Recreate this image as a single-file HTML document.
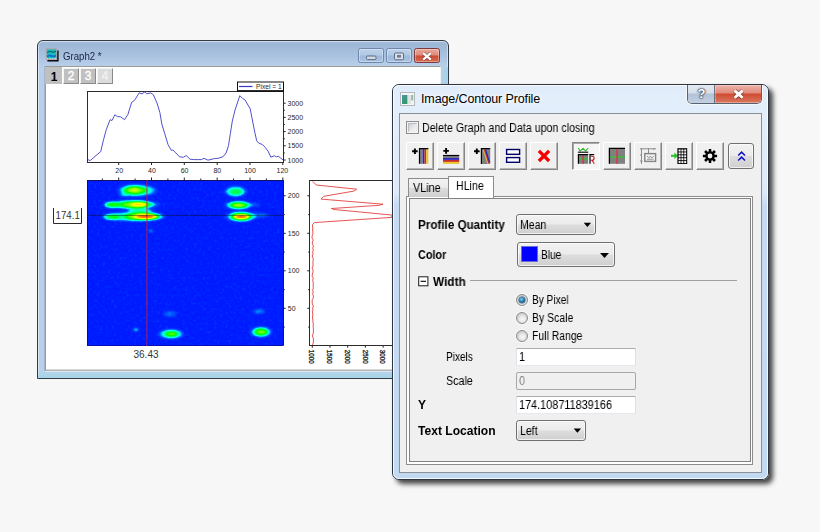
<!DOCTYPE html>
<html lang="en">
<head>
<meta charset="utf-8">
<title>Image/Contour Profile</title>
<style>
html,body{margin:0;padding:0;}
body{width:820px;height:532px;overflow:hidden;position:relative;background:#f7f7f7;font-family:"Liberation Sans",sans-serif;font-size:11px;color:#000;}
*{box-sizing:border-box;}
.abs{position:absolute;}
/* ---------- graph window ---------- */
#gw{position:absolute;left:37px;top:40px;width:412px;height:339px;border:1px solid #323a44;border-radius:6px 6px 0 0;
 background:linear-gradient(#a9c0dc 0px,#9db7d6 3px,#a8c1df 14px,#b9d0ea 26px,#b9d0ea 320px,#b4d5ea 337px);overflow:hidden;}
#gw .hl{position:absolute;left:0;top:0;right:0;bottom:0;border:1px solid rgba(255,255,255,.45);border-radius:5px 5px 0 0;}
#gw .client{position:absolute;left:7px;top:25px;width:396px;height:305px;background:#fff;border:1px solid #9b9b9b;border-right-color:#f2f2f2;border-bottom-color:#b4b4b4;box-shadow:-1px 0 0 rgba(140,150,160,.45),0 1px 0 rgba(225,235,245,.9),inset 0 -1px 0 #d8d8d8;}
#gw .ttl{position:absolute;left:25px;top:8px;font-size:11px;line-height:14px;color:#1c2346;white-space:nowrap;transform-origin:0 50%;transform:scaleX(.875);}
.cb{position:absolute;top:7px;height:15px;width:26px;border:1px solid #6f87a8;border-radius:2.5px;background:linear-gradient(#bcd1ea 0,#b1c9e5 48%,#9db9da 52%,#a9c3e2 100%);box-shadow:inset 0 0 0 1px rgba(255,255,255,.35);}
.cb.x{border-color:#7c3a3a;background:linear-gradient(#eaa798 0,#dd8b7a 48%,#cc4a32 52%,#d66a50 100%);}
.pt{position:absolute;top:27px;margin-left:-1px;height:16px;width:16px;background:#c0c0c0;border:1px solid;border-color:#f4f4f4 #8a8a8a #8a8a8a #f4f4f4;color:#fff;font-weight:bold;font-size:12px;line-height:14px;text-align:center;}
.pt.n{font-weight:normal;-webkit-text-stroke:.35px #fff;}
/* ---------- dialog ---------- */
#dw{position:absolute;left:392px;top:84px;width:377px;height:396px;border:1px solid #2e3440;border-radius:7px;
 background:linear-gradient(#dfebfa 0,#e3eefb 12px,#e2edfb 30px,#dde9f9 108px,#c6dbf3 120px,#c2d9f2 100%);
 box-shadow:4px 4px 5px rgba(0,0,0,.72);}
#dw .hl{position:absolute;left:0;top:0;right:0;bottom:0;border:1px solid rgba(255,255,255,.8);border-radius:6px;}
#dw .client{position:absolute;left:6px;top:28px;width:363px;height:360px;background:#f0f0f0;border:1px solid #8c9096;}
#dw .ttl{position:absolute;left:28px;top:7px;font-size:12.5px;line-height:14px;color:#000;white-space:nowrap;letter-spacing:-.12px;text-shadow:0 0 4px #fff,0 0 6px #fff;}
.ui{position:absolute;white-space:nowrap;line-height:13px;font-size:12px;will-change:transform;transform-origin:0 0;}
.b{font-weight:bold;}
.tb{position:absolute;top:142px;width:28px;height:28px;background:#f0f0f0;border:1px solid;border-color:#fff #868686 #868686 #fff;box-shadow:inset -1px -1px 0 #b4b4b4;}
.tb.dn{border-color:#868686 #fff #fff #868686;box-shadow:inset 1px 1px 0 #a8a8a8;background:#f6f6f6;}
.combo{position:absolute;border:1px solid #707070;border-radius:3px;background:linear-gradient(#f2f2f2 0,#ebebeb 48%,#dddddd 52%,#cfcfcf 100%);box-shadow:inset 0 0 0 1px rgba(255,255,255,.7);}
.inp{position:absolute;left:516px;width:120px;height:18px;background:#fff;border:1px solid;border-color:#abadb3 #dbdfe6 #e3e9ef #e2e3ea;}
.radio{position:absolute;left:516px;width:12px;height:12px;border-radius:50%;border:1px solid #8a8b8b;background:radial-gradient(circle at 55% 60%,#f8f8f8 0,#ececec 30%,#d0d0d0 65%,#bcbcbc 100%);box-shadow:0 0 0 1px rgba(255,255,255,.55);}
</style>
</head>
<body>
<!-- ================= Graph window ================= -->
<div id="gw">
  <div class="hl"></div>
  <svg class="abs" style="left:7px;top:7px" width="15" height="15" viewBox="0 0 15 15">
    <path d="M2.4 11.6H11.9V2.4H13.6V13.5H2.4z" fill="#000"/>
    <rect x="1.2" y="0.8" width="10.6" height="10.8" fill="#14c2ba" stroke="#c0a0a8" stroke-width="1"/>
    <path d="M2.2 4.8 Q4.6 2.6 6.6 3.8 T10.8 3" stroke="#0a6474" stroke-width="1.2" fill="none"/>
    <path d="M2 8.6 Q4.6 6.8 6.6 7.9 T11 7.4" stroke="#1470d0" stroke-width="1.8" fill="none"/>
    <path d="M1.6 10.6h9.8" stroke="#e8d8e0" stroke-width="1" stroke-dasharray="1.6 1"/>
  </svg>
  <div class="ttl">Graph2 *</div>
  <div class="cb" style="left:320px"><svg class="abs" style="left:0;top:0" width="24" height="13" viewBox="0 -1 24 13"><rect x="7.5" y="6" width="9.5" height="3.6" rx="1" fill="#d3d9e2" stroke="#5d6c84"/></svg></div>
  <div class="cb" style="left:348px"><svg class="abs" style="left:0;top:0" width="24" height="13" viewBox="0 -1 24 13"><rect x="7.5" y="3" width="9" height="6.8" rx="1" fill="#dbe0e8" stroke="#5d6c84"/><rect x="10" y="5" width="4" height="2.6" fill="#6c7a92"/></svg></div>
  <div class="cb x" style="left:376px"><svg class="abs" style="left:0;top:0" width="24" height="13" viewBox="0 -1 24 13"><path d="M8.2 3.2l7.6 6.4M15.8 3.2l-7.6 6.4" stroke="#5a2a2a" stroke-width="3.6" stroke-opacity=".55" fill="none"/><path d="M8.2 3.2l7.6 6.4M15.8 3.2l-7.6 6.4" stroke="#fff" stroke-width="2.2" fill="none"/></svg></div>
  <div class="abs" style="right:0;top:26px;width:7px;height:311px;background:linear-gradient(90deg,rgba(170,215,232,0),rgba(160,212,232,.9))"></div>
  <div class="abs" style="left:0;bottom:0;width:410px;height:7px;background:linear-gradient(rgba(170,215,232,0),rgba(165,212,230,.9))"></div>
  <div class="client"></div>
  <div class="pt" style="left:8px;top:26px;width:17px;height:17px;border-color:#c0c0c0;color:#000;line-height:18px;font-size:12px;text-indent:1px">1</div>
  <div class="pt n" style="left:26px">2</div>
  <div class="pt n" style="left:43px">3</div>
  <div class="pt n" style="left:60px;background:#dcdcdc;color:#f2f2f2;-webkit-text-stroke:.3px #f2f2f2">4</div>
</div>
<svg class="abs" style="left:0;top:0" width="820" height="532" viewBox="0 0 820 532" font-family="'Liberation Sans',sans-serif">
<defs>
<filter id="jet" x="0" y="0" width="100%" height="100%" color-interpolation-filters="sRGB">
<feTurbulence type="fractalNoise" baseFrequency="0.35" numOctaves="2" seed="7" result="n"/>
<feColorMatrix in="n" type="matrix" values="0 0 0 0 0  0 0 0 0 0  0 0 0 0 0  1.5 0 0 0 -0.74" result="na"/>
<feGaussianBlur in="SourceGraphic" stdDeviation="0.9" result="s"/>
<feComposite in="s" in2="na" operator="arithmetic" k1="0" k2="1" k3="0.07" k4="0" result="m"/>
<feColorMatrix in="m" type="matrix" values="0 0 0 1 0  0 0 0 1 0  0 0 0 1 0  0 0 0 0 1" result="g"/>
<feComponentTransfer in="g"><feFuncR type="table" tableValues="0 0 0 0 0 0.6 1 1 1"/><feFuncG type="table" tableValues="0.06 0.35 1 1 1 1 1 0.5 0"/><feFuncB type="table" tableValues="1 1 1 0.5 0 0 0 0 0"/></feComponentTransfer>
</filter>
<radialGradient id="g1"><stop offset="0" stop-color="#fff" stop-opacity="1"/><stop offset="0.55" stop-color="#fff" stop-opacity="0.9"/><stop offset="0.8" stop-color="#fff" stop-opacity="0.45"/><stop offset="1" stop-color="#fff" stop-opacity="0"/></radialGradient>
</defs>
<g filter="url(#jet)">
<rect x="87" y="180" width="196" height="166" fill="#fff" fill-opacity="0.02"/>
<ellipse cx="136" cy="190.5" rx="20" ry="7" fill="url(#g1)" opacity="0.3"/>
<ellipse cx="134.5" cy="190.3" rx="13.5" ry="5" fill="url(#g1)" opacity="0.45"/>
<ellipse cx="134" cy="190" rx="6" ry="2.6" fill="url(#g1)" opacity="0.2"/>
<ellipse cx="132" cy="204.6" rx="30" ry="5" fill="url(#g1)" opacity="0.3"/>
<ellipse cx="112" cy="204.8" rx="9" ry="3.5" fill="url(#g1)" opacity="0.4"/>
<ellipse cx="135" cy="204.6" rx="20" ry="4.5" fill="url(#g1)" opacity="0.45"/>
<ellipse cx="139" cy="204.6" rx="10" ry="3" fill="url(#g1)" opacity="0.5"/>
<ellipse cx="134" cy="216.5" rx="34" ry="5.5" fill="url(#g1)" opacity="0.3"/>
<ellipse cx="112" cy="217" rx="10" ry="3.5" fill="url(#g1)" opacity="0.35"/>
<ellipse cx="142" cy="216.5" rx="22" ry="4.5" fill="url(#g1)" opacity="0.5"/>
<ellipse cx="146" cy="216.6" rx="14" ry="3.2" fill="url(#g1)" opacity="0.8"/>
<ellipse cx="140" cy="210.8" rx="15" ry="3" fill="url(#g1)" opacity="0.3"/>
<ellipse cx="150" cy="190.5" rx="9" ry="5" fill="url(#g1)" opacity="0.1"/>
<ellipse cx="124" cy="195" rx="6" ry="2.5" fill="url(#g1)" opacity="0.15"/>
<ellipse cx="235.5" cy="191.5" rx="12" ry="6" fill="url(#g1)" opacity="0.3"/>
<ellipse cx="236" cy="192" rx="8" ry="4" fill="url(#g1)" opacity="0.18"/>
<ellipse cx="238.5" cy="205.2" rx="15" ry="5" fill="url(#g1)" opacity="0.3"/>
<ellipse cx="238.5" cy="205.2" rx="11" ry="3.5" fill="url(#g1)" opacity="0.45"/>
<ellipse cx="239" cy="205.2" rx="5" ry="2" fill="url(#g1)" opacity="0.15"/>
<ellipse cx="241" cy="216.6" rx="17" ry="6" fill="url(#g1)" opacity="0.3"/>
<ellipse cx="241" cy="216.6" rx="12.5" ry="4.5" fill="url(#g1)" opacity="0.5"/>
<ellipse cx="241.5" cy="216.8" rx="9" ry="2.6" fill="url(#g1)" opacity="0.8"/>
<ellipse cx="258" cy="215.3" rx="14" ry="2.5" fill="url(#g1)" opacity="0.14"/>
<ellipse cx="252" cy="204.8" rx="10" ry="2" fill="url(#g1)" opacity="0.12"/>
<ellipse cx="171" cy="334" rx="14" ry="5.5" fill="url(#g1)" opacity="0.3"/>
<ellipse cx="171.5" cy="334" rx="8" ry="3.5" fill="url(#g1)" opacity="0.4"/>
<ellipse cx="261" cy="332" rx="12" ry="6" fill="url(#g1)" opacity="0.3"/>
<ellipse cx="261" cy="332" rx="8" ry="4.2" fill="url(#g1)" opacity="0.42"/>
<ellipse cx="170" cy="314" rx="8" ry="3.5" fill="url(#g1)" opacity="0.12"/>
<ellipse cx="259" cy="311.5" rx="7" ry="3" fill="url(#g1)" opacity="0.15"/>
<ellipse cx="136" cy="329.7" rx="3" ry="1.8" fill="url(#g1)" opacity="0.3"/>
<ellipse cx="151" cy="231" rx="2.5" ry="1.5" fill="url(#g1)" opacity="0.25"/>
</g>
<path d="M87.5 346 V180.5 H283.5" stroke="#10106a" fill="none" stroke-width="1"/>
<path d="M87 345.5 H283.5 V180" stroke="#0a10b8" fill="none" stroke-width="1"/>
<line x1="146.9" y1="180" x2="146.9" y2="346" stroke="#c0203c" stroke-width="1.1" opacity="0.8"/>
<line x1="87" y1="215.4" x2="283" y2="215.4" stroke="#06101c" stroke-width="0.9" opacity="0.55"/>
<path d="M102.3 180 v-1.5 M118.7 180 v-2.5 M135.1 180 v-1.5 M151.5 180 v-2.5 M167.9 180 v-1.5 M184.3 180 v-2.5 M200.8 180 v-1.5 M217.2 180 v-2.5 M233.6 180 v-1.5 M250.0 180 v-2.5 M266.4 180 v-1.5 M282.8 180 v-2.5 M283.5 327.1 h1.3 M283.5 308.3 h2.2 M283.5 289.6 h1.3 M283.5 270.8 h2.2 M283.5 252.1 h1.3 M283.5 233.3 h2.2 M283.5 214.6 h1.3 M283.5 195.8 h2.2" stroke="#222" stroke-width="1" fill="none"/>
<rect x="87.5" y="91.5" width="196" height="71" fill="#fff" stroke="#2c2c2c" stroke-width="1"/>
<path d="M118.7 163 v2 M151.5 163 v2 M184.3 163 v2 M217.2 163 v2 M250.0 163 v2 M282.8 163 v2 M283.5 160.0 h2.2 M283.5 152.9 h1.3 M283.5 145.8 h2.2 M283.5 138.7 h1.3 M283.5 131.6 h2.2 M283.5 124.5 h1.3 M283.5 117.4 h2.2 M283.5 110.3 h1.3 M283.5 103.2 h2.2" stroke="#222" stroke-width="1" fill="none"/>
<path d="M87.5 159.6 L90.3 160.5 L96.0 155.5 L100.7 151.7 L103.5 139.8 L106.3 129.5 L110.1 119.7 L112.0 120.5 L114.8 114.8 L117.6 116.7 L120.4 116.7 L124.5 119.7 L127.9 114.5 L131.7 102.3 L134.5 100.4 L139.2 92.9 L142.0 93.8 L144.8 91.9 L146.7 93.8 L150.5 92.9 L153.3 94.7 L157.1 103.2 L159.9 112.6 L161.8 123.9 L164.6 133.3 L168.0 144.5 L171.2 150.2 L173.0 150.2 L175.9 153.0 L179.6 156.8 L183.4 157.3 L186.2 155.5 L190.0 159.2 L193.8 159.6 L197.5 159.6 L201.3 159.6 L204.1 158.3 L207.9 160.2 L214.4 158.6 L218.2 158.3 L222.9 156.8 L226.1 153.0 L228.5 145.5 L230.4 133.3 L232.3 121.1 L235.1 109.8 L239.8 95.7 L242.6 98.5 L244.9 99.8 L250.2 108.8 L252.0 118.2 L254.8 132.3 L256.7 140.8 L258.6 143.0 L262.4 144.5 L265.2 147.4 L268.0 151.1 L270.8 157.1 L274.6 155.8 L276.5 156.8 L278.3 156.2 L283.0 160.0" stroke="#3c3cc8" stroke-width="0.9" fill="none" stroke-linejoin="round"/>
<rect x="237.5" y="82" width="46" height="9" fill="#fff" stroke="#111" stroke-width="1"/>
<path d="M237 91 H284" stroke="#111" stroke-width="1.6" fill="none"/>
<line x1="239" y1="86.5" x2="252.5" y2="86.5" stroke="#3838c8" stroke-width="1.2"/>
<text x="256" y="89" font-size="7" fill="#2a2a2a" textLength="25.6" lengthAdjust="spacingAndGlyphs">Pixel = 1</text>
<g font-size="7" fill="#262626" text-anchor="middle">
<text x="119.2" y="173.3">20</text>
<text x="151.9" y="173.3">40</text>
<text x="184.6" y="173.3">60</text>
<text x="217.3" y="173.3">80</text>
<text x="250.0" y="173.3">100</text>
<text x="282.4" y="173.3">120</text>
</g>
<g font-size="7" fill="#262626">
<text x="287.5" y="162.6">1000</text>
<text x="287.5" y="148.4">1500</text>
<text x="287.5" y="134.2">2000</text>
<text x="287.5" y="120.0">2500</text>
<text x="287.5" y="105.8">3000</text>
<text x="287.8" y="310.9">50</text>
<text x="287.8" y="273.4">100</text>
<text x="287.8" y="235.9">150</text>
<text x="287.8" y="198.4">200</text>
</g>
<rect x="309.5" y="180.5" width="110" height="165" fill="#fff" stroke="#2c2c2c" stroke-width="1"/>
<path d="M309.5 327.1 h-1.3 M309.5 308.3 h-2.2 M309.5 289.6 h-1.3 M309.5 270.8 h-2.2 M309.5 252.1 h-1.3 M309.5 233.3 h-2.2 M309.5 214.6 h-1.3 M309.5 195.8 h-2.2 M312.3 345.5 v2.2 M330.0 345.5 v2.2 M347.7 345.5 v2.2 M365.4 345.5 v2.2 M383.1 345.5 v2.2" stroke="#222" stroke-width="1" fill="none"/>
<path d="M312.6 181.3 L316.3 185.0 L356.7 189.2 L353.9 191.1 L323.8 196.3 L321.0 199.1 L383.0 204.2 L379.3 205.3 L331.4 208.5 L334.2 209.5 L392.4 215.1 L391.5 217.4 L314.4 222.6 L312.6 224.5 L312.4 226.0 L312.8 228.0 L312.6 230.0 L312.9 232.0 L312.9 234.0 L312.1 236.0 L312.0 238.0 L313.3 240.0 L312.4 242.0 L312.4 244.0 L313.5 246.0 L312.7 248.0 L313.3 250.0 L312.7 252.0 L313.0 254.0 L312.2 256.0 L313.0 258.0 L313.3 260.0 L312.8 262.0 L313.1 264.0 L313.0 266.0 L312.1 268.0 L313.1 270.0 L312.9 272.0 L312.5 274.0 L312.0 276.0 L313.3 278.0 L312.7 280.0 L313.1 282.0 L313.3 284.0 L313.1 286.0 L313.4 288.0 L312.6 290.0 L313.2 292.0 L312.7 294.0 L313.4 296.0 L313.3 298.0 L312.1 300.0 L312.2 302.0 L312.3 304.0 L313.4 306.0 L312.7 308.0 L312.9 310.0 L312.5 312.0 L312.8 314.0 L312.6 316.0 L312.5 318.0 L312.9 320.0 L312.9 322.0 L313.4 324.0 L313.0 326.0 L313.4 328.0 L313.3 330.0 L313.5 332.0 L313.0 334.0 L312.2 336.0 L313.3 338.0 L313.4 340.0 L313.4 342.0 L312.9 344.0 L312.6 345.0" stroke="#e23636" stroke-width="0.85" fill="none" stroke-linejoin="round"/>
<g font-size="6.6" fill="#1a1a1a" stroke="#1a1a1a" stroke-width=".3">
<text transform="translate(309.4 349.8) rotate(90)" textLength="13.8" lengthAdjust="spacingAndGlyphs">1000</text>
<text transform="translate(327.1 349.8) rotate(90)" textLength="13.8" lengthAdjust="spacingAndGlyphs">1500</text>
<text transform="translate(344.8 349.8) rotate(90)" textLength="13.8" lengthAdjust="spacingAndGlyphs">2000</text>
<text transform="translate(362.5 349.8) rotate(90)" textLength="13.8" lengthAdjust="spacingAndGlyphs">2500</text>
<text transform="translate(380.2 349.8) rotate(90)" textLength="13.8" lengthAdjust="spacingAndGlyphs">3000</text>
</g>
<path d="M53.5 208 V223.5 H81.5 V208" stroke="#2a2a2a" stroke-width="1" fill="none"/>
<text x="55.6" y="219.4" font-size="10.5" fill="#333" textLength="24.2" lengthAdjust="spacingAndGlyphs">174.1</text>
<text x="146" y="358.3" font-size="10" fill="#333" text-anchor="middle">36.43</text>
</svg>
<!-- ================= Dialog ================= -->
<div id="dw">
  <div class="hl"></div>
  <div class="ttl">Image/Contour Profile</div>
  <div class="client"></div>
</div>
<!-- dialog title icon + buttons -->
<svg class="abs" style="left:400px;top:92px" width="15" height="14" viewBox="0 0 15 14">
  <defs><linearGradient id="ig" x1="0" x2="0.6" y1="0" y2="1"><stop offset="0" stop-color="#4f93a8"/><stop offset="1" stop-color="#2f9a68"/></linearGradient></defs>
  <rect x="0.5" y="0.5" width="14" height="13" fill="#f4f6f6" stroke="#b4babc"/>
  <rect x="2" y="3" width="5.6" height="9" fill="url(#ig)"/>
  <rect x="7.6" y="3" width="3.6" height="9" fill="#dfe3e2"/>
  <rect x="11.2" y="3" width="2" height="5.4" fill="#8fb8a4"/>
</svg>
<div class="abs" style="left:686px;top:85px;width:77px;height:20px;border-radius:0 0 6px 6px;background:rgba(255,255,255,.6)"></div>
<div class="abs" style="left:687px;top:85px;width:75px;height:19px;border:1px solid #5a6272;border-top:none;border-radius:0 0 5px 5px;overflow:hidden;">
  <div class="abs" style="left:0;top:0;width:27px;height:18px;background:linear-gradient(#e4eaf2 0,#d5dde9 45%,#b4c2d6 50%,#c3d0e2 100%);border-right:1px solid #6a7282;"></div>
  <div class="abs" style="left:27px;top:0;width:47px;height:18px;background:linear-gradient(#eeb5aa 0,#e08a7a 45%,#cf4a30 50%,#d97a62 100%);box-shadow:inset 0 0 0 1px rgba(255,255,255,.3)"></div>
  <div class="abs" style="left:0;top:0;width:27px;text-align:center;font-weight:bold;font-size:13px;line-height:17px;color:#fff;text-shadow:0 0 1px #3a4252,0 0 1px #3a4252,0 0 2px #3a4252,0 0 2px #3a4252">?</div>
  <svg class="abs" style="left:27px;top:0" width="47" height="18" viewBox="0 0 47 18"><path d="M19.6 5.6l8 7.2M27.6 5.6l-8 7.2" stroke="#4a2a2a" stroke-width="4.4" stroke-opacity=".6" fill="none"/><path d="M19.6 5.6l8 7.2M27.6 5.6l-8 7.2" stroke="#fff" stroke-width="2.8" fill="none"/></svg>
</div>
<!-- checkbox -->
<div class="abs" style="left:406px;top:121px;width:13px;height:13px;border:1px solid #8e8f8f;background:#f4f4f4;"><div class="abs" style="left:1px;top:1px;width:9px;height:9px;border:1px solid;border-color:#b8bcc2 #e6e8ea #eceeef #babec4;background:linear-gradient(135deg,#ccd0d6 0,#e2e4e7 45%,#f6f6f6 100%)"></div></div>
<div class="ui" id="t_del" style="transform:scaleX(0.889);left:422px;top:122px">Delete Graph and Data upon closing</div>
<!-- toolbar -->
<div class="tb" style="left:406px"><svg width="26" height="26" viewBox="0 0 26 26">
  <path d="M5.1 8.2h5.6M7.9 5.4v5.6" stroke="#000" stroke-width="1.9"/>
  <rect x="12.6" y="5.4" width="3" height="15.4" fill="#808080"/><rect x="15.6" y="5.4" width="1.8" height="15.4" fill="#2828c8"/><rect x="17.4" y="5.4" width="1.8" height="15.4" fill="#c82828"/><rect x="19.2" y="5.4" width="2.1" height="15.4" fill="#e8c428"/>
  <path d="M12.5 20.8V5.6h8.8" stroke="#000" stroke-width="1.2" fill="none"/>
</svg></div>
<div class="tb" style="left:437px"><svg width="26" height="26" viewBox="0 0 26 26">
  <path d="M5.3 7.9h5.6M8.1 5.1v5.6" stroke="#000" stroke-width="1.9"/>
  <rect x="5" y="12.4" width="16.2" height="2.6" fill="#808080"/><rect x="5" y="15" width="16.2" height="1.9" fill="#2828c8"/><rect x="5" y="16.9" width="16.2" height="2" fill="#c82828"/><rect x="5" y="18.9" width="16.2" height="1.9" fill="#e8c428"/>
  <path d="M5 12.5h16.2" stroke="#000" stroke-width="1.2"/>
</svg></div>
<div class="tb" style="left:468px"><svg width="26" height="26" viewBox="0 0 26 26">
  <path d="M5 8.2h5.6M7.8 5.4v5.6" stroke="#000" stroke-width="1.9"/>
  <rect x="12.4" y="5.4" width="8.8" height="15.6" fill="#808080"/>
  <path d="M14.4 6.6l4.6 14" stroke="#e8c428" stroke-width="1.3"/><path d="M15.5 6.6l4.4 13.4" stroke="#c82828" stroke-width="1.1"/><path d="M16.5 6.6l4.2 12.8" stroke="#2828c8" stroke-width="1.3"/>
  <path d="M12.4 21V5.6h8.8" stroke="#000" stroke-width="1.2" fill="none"/>
</svg></div>
<div class="tb" style="left:499px"><svg width="26" height="26" viewBox="0 0 26 26">
  <rect x="6.6" y="6.5" width="13" height="4.8" fill="#fff" stroke="#000068" stroke-width="1.4"/>
  <rect x="6.6" y="14.6" width="13" height="4.7" fill="#fff" stroke="#000068" stroke-width="1.4"/>
</svg></div>
<div class="tb" style="left:530px"><svg width="26" height="26" viewBox="0 0 26 26">
  <path d="M7.9 7.8l10.2 10.2M18.1 7.8l-10.2 10.2" stroke="#f40000" stroke-width="3.3" fill="none"/>
</svg></div>
<div class="tb dn" style="left:572px"><svg width="26" height="26" viewBox="0.9 0 26 26">
  <path d="M6.2 5l1.8 3l3 -2.6l2.6 2.6l2.4 -3" stroke="#28b428" stroke-width="1.1" fill="none"/>
  <path d="M5.8 9.2h10.4" stroke="#000" stroke-width="1.1"/>
  <rect x="6.2" y="11.2" width="9.8" height="9.6" fill="#808080"/>
  <path d="M6.2 15.8h9.8" stroke="#38c038" stroke-width="1.4"/><path d="M11 11.2v9.6" stroke="#d83838" stroke-width="1.4"/>
  <path d="M6.3 20.8V11.6h9.8" stroke="#000" stroke-width="1.2" fill="none"/>
  <path d="M17.9 20.8V11.6h4.2" stroke="#000" stroke-width="1.2" fill="none"/>
  <path d="M18.6 13.2h1.4q2 0 2 2t-2 2h-1.4M20 17.2l2.2 3.6" stroke="#c81818" stroke-width="1.1" fill="none"/>
</svg></div>
<div class="tb" style="left:603px"><svg width="26" height="26" viewBox="0 0 26 26">
  <rect x="5.2" y="5" width="15.8" height="15.8" fill="#808080"/>
  <path d="M5.2 14h15.8" stroke="#38c038" stroke-width="1.5"/><path d="M13.1 5v15.8" stroke="#d83838" stroke-width="1.5"/>
  <path d="M5.4 20.8V5.4h15.6" stroke="#000" stroke-width="1.3" fill="none"/>
</svg></div>
<div class="tb" style="left:634px"><svg width="26" height="26" viewBox="0 0 26 26">
  <path d="M6.5 5v16M5 5.8h16M5 12h1.5M5 18h2.5M13.5 5v5M18.8 5v2" stroke="#8c8c8c" stroke-width="1" fill="none"/>
  <rect x="9.8" y="10.6" width="10.8" height="7.8" fill="#f0f0f0" stroke="#848484" stroke-width="1.4"/>
  <path d="M12 13l1.6 1.6l1.8 -1.2l1.6 1.4l1.4 -1.6M12 16.2h6.4" stroke="#848484" stroke-width=".9" fill="none"/>
</svg></div>
<div class="tb" style="left:665px"><svg width="26" height="26" viewBox="0 0 26 26">
  <path d="M5 12.8h5" stroke="#28c028" stroke-width="2"/><path d="M8.4 9.6l3.6 3.2l-3.6 3.2z" fill="#28c028"/>
  <rect x="11.4" y="5.2" width="9.8" height="15.8" fill="#000"/>
  <g fill="#fff"><rect x="12.6" y="6.5" width="2" height="2"/><rect x="15.4" y="6.5" width="2" height="2"/><rect x="18.2" y="6.5" width="2" height="2"/><rect x="12.6" y="9.4" width="2" height="2"/><rect x="15.4" y="9.4" width="2" height="2"/><rect x="18.2" y="9.4" width="2" height="2"/><rect x="12.6" y="12.3" width="2" height="2"/><rect x="15.4" y="12.3" width="2" height="2"/><rect x="18.2" y="12.3" width="2" height="2"/><rect x="12.6" y="15.2" width="2" height="2"/><rect x="15.4" y="15.2" width="2" height="2"/><rect x="18.2" y="15.2" width="2" height="2"/><rect x="12.6" y="18.1" width="2" height="2"/><rect x="15.4" y="18.1" width="2" height="2"/><rect x="18.2" y="18.1" width="2" height="2"/></g>
</svg></div>
<div class="tb" style="left:696px"><svg width="26" height="26" viewBox="0 0 26 26">
  <g stroke="#000" stroke-width="2.5" stroke-linecap="butt"><path d="M13 5.9v14.2M5.9 13h14.2M8 8l10 10M18 8l-10 10"/></g>
  <circle cx="13" cy="13" r="4.8" fill="#000"/><circle cx="13" cy="13" r="2.4" fill="#f0f0f0"/>
</svg></div>
<div class="abs" style="left:728px;top:143px;width:26px;height:26px;border:1px solid #707070;border-radius:3px;background:linear-gradient(#f2f2f2 0,#ebebeb 48%,#dddddd 52%,#cfcfcf 100%);box-shadow:inset 0 0 0 1px rgba(255,255,255,.7)"><svg width="24" height="24" viewBox="0 0 24 24">
  <path d="M9.2 11.5l3.4 -3.4l3.4 3.4M9.2 16.5l3.4 -3.4l3.4 3.4" stroke="#1010c8" stroke-width="1.5" fill="none"/>
</svg></div>
<!-- tab control -->
<div class="abs" style="left:406px;top:196px;width:347px;height:269px;border:1px solid;border-color:#8c8c8c #8c8c8c #8c8c8c #8c8c8c;background:#fff;"></div>
<div class="abs" style="left:409px;top:198px;width:342px;height:264px;border:1px solid #828282;background:#f0f0f0;"></div>
<div class="abs" style="left:408px;top:178px;width:41px;height:19px;border:1px solid #8c8c8c;border-bottom:none;background:linear-gradient(#f2f2f2 0,#ebebeb 48%,#dddddd 52%,#cfcfcf 100%);"></div>
<div class="abs" style="left:448px;top:176px;width:46px;height:22px;border:1px solid #8c8c8c;border-bottom:none;background:#fff;"></div>
<div class="ui" id="t_vl" style="transform:scaleX(0.902);left:413px;top:182px">VLine</div>
<div class="ui" id="t_hl" style="transform:scaleX(0.885);left:456px;top:180px">HLine</div>
<!-- form -->
<div class="ui b" id="t_pq" style="transform:scaleX(0.971);left:418px;top:219px">Profile Quantity</div>
<div class="combo" style="left:516px;top:214px;width:80px;height:21px"></div>
<div class="ui" id="t_mean" style="transform:scaleX(0.877);left:520px;top:219px">Mean</div>
<div class="ui b" id="t_col" style="transform:scaleX(0.904);left:418px;top:249px">Color</div>
<div class="combo" style="left:517px;top:242px;width:98px;height:25px"></div>
<div class="abs" style="left:521px;top:246px;width:17px;height:16px;background:#0000fe;border:1px solid #6a6ae0"></div>
<div class="ui" id="t_blue" style="transform:scaleX(0.846);left:541px;top:249px">Blue</div>
<svg class="abs" style="left:417px;top:275px" width="13" height="13" viewBox="0 0 13 13"><rect x="1.7" y="1.8" width="9.2" height="9" fill="#fff" stroke="#1a1a1a" stroke-width="1"/><path d="M3.6 6.3h5.4" stroke="#000" stroke-width="1.1"/></svg>
<div class="ui b" id="t_w" style="transform:scaleX(0.982);left:433px;top:276px">Width</div>
<div class="abs" style="left:470px;top:280px;width:267px;height:1px;background:#a0a0a0"></div>
<div class="radio" style="top:294px"><span class="abs" style="left:2px;top:2px;width:6px;height:6px;border-radius:50%;background:radial-gradient(circle at 42% 38%,#8fd2ee 0,#2a86bc 40%,#0c4470 85%,#0a3050 100%);box-shadow:0 0 0 .5px #1a4a6a"></span></div>
<div class="radio" style="top:312px"></div>
<div class="radio" style="top:330px"></div>
<div class="ui" id="t_r1" style="transform:scaleX(0.843);left:532px;top:294px">By Pixel</div>
<div class="ui" id="t_r2" style="transform:scaleX(0.873);left:532px;top:312px">By Scale</div>
<div class="ui" id="t_r3" style="transform:scaleX(0.869);left:532px;top:330px">Full Range</div>
<div class="ui" id="t_px" style="transform:scaleX(0.8375);left:446px;top:351px">Pixels</div>
<div class="inp" style="top:348px"></div>
<div class="ui" id="t_1" style="transform:scaleX(0.906);left:518.5px;top:351px">1</div>
<div class="ui" id="t_sc" style="transform:scaleX(0.893);left:446px;top:375px">Scale</div>
<div class="inp" style="top:372px;background:#f0f0f0;border-color:#a8a8a8;border-radius:2px"></div>
<div class="ui" id="t_0" style="transform:scaleX(0.906);left:518.5px;top:375px;color:#808080;-webkit-text-stroke:0">0</div>
<div class="ui b" id="t_y" style="transform:scaleX(0.95);left:418px;top:399px">Y</div>
<div class="inp" style="top:396px"></div>
<div class="ui" id="t_yv" style="transform:scaleX(0.906);left:518.5px;top:399px">174.108711839166</div>
<div class="ui b" id="t_tl" style="transform:scaleX(1.006);left:418px;top:425px">Text Location</div>
<div class="combo" style="left:516px;top:420px;width:70px;height:21px"></div>
<div class="ui" id="t_left" style="transform:scaleX(0.88);left:520px;top:425px">Left</div>
<svg class="abs" style="left:0;top:0;pointer-events:none" width="820" height="532" viewBox="0 0 820 532">
<path d="M583.7 222.7h7.4l-3.7 4.2z" fill="#000"/>
<path d="M600 252.9h9l-4.5 5z" fill="#000"/>
<path d="M573.7 428.5h7.4l-3.7 4.2z" fill="#000"/>
</svg>

</body>
</html>
